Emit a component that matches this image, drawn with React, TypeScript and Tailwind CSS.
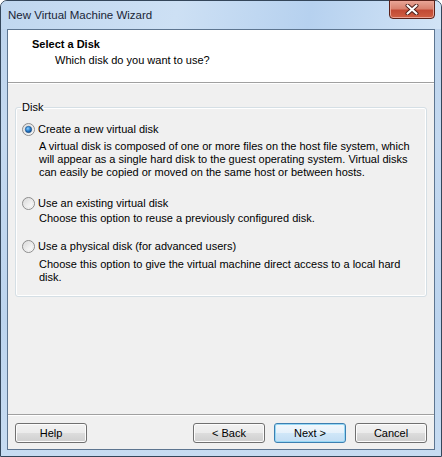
import React from "react";

function Radio({ checked, id }: { checked?: boolean; id: string }) {
  return (
    <svg width="13" height="13" viewBox="0 0 13 13" className="shrink-0">
      <defs>
        <linearGradient id={`${id}-bg`} x1="0" y1="0" x2="1" y2="1">
          <stop offset="0" stopColor="#d4d4d4" />
          <stop offset="0.6" stopColor="#f2f2f2" />
          <stop offset="1" stopColor="#ffffff" />
        </linearGradient>
        <radialGradient id={`${id}-dot`} cx="0.4" cy="0.35" r="0.7">
          <stop offset="0" stopColor="#8ed0ff" />
          <stop offset="0.5" stopColor="#2d84d2" />
          <stop offset="1" stopColor="#0d3d7a" />
        </radialGradient>
      </defs>
      <circle cx="6.5" cy="6.5" r="6" fill={`url(#${id}-bg)`} stroke="#8c8c8c" />
      <circle cx="6.5" cy="6.5" r="4.5" fill="none" stroke="#e6e6e6" strokeWidth="0.8" />
      {checked && (
        <circle cx="6.5" cy="6.5" r="3.2" fill={`url(#${id}-dot)`} stroke="#1a4f86" strokeWidth="0.6" />
      )}
    </svg>
  );
}

function Button({ label, primary }: { label: string; primary?: boolean }) {
  return (
    <button
      className={
        "w-[72px] h-[20px] rounded-[3px] border text-[11px] leading-none text-black flex items-center justify-center " +
        (primary
          ? "border-[#3c7fb1] shadow-[inset_0_0_0_1px_#97d8f5] bg-[linear-gradient(to_bottom,#f2f8fc_0%,#e5f1fb_50%,#d0e7f8_51%,#c2ddf4_100%)]"
          : "border-[#707070] shadow-[inset_0_0_0_1px_#fcfcfc] bg-[linear-gradient(to_bottom,#f2f2f2_0%,#ebebeb_50%,#dddddd_51%,#cfcfcf_100%)]")
      }
    >
      {label}
    </button>
  );
}

export default function App() {
  return (
    <div className="w-[442px] h-[457px] font-['Liberation_Sans',Arial,sans-serif]">
      <div className="h-full flex flex-col rounded-t-[7px] border border-[#34465a] bg-[linear-gradient(to_bottom,#bcd3ec_0%,#c4d9f0_30%,#bcd4ee_70%,#c7dcf2_100%)]">
        {/* Title bar */}
        <div className="h-[28px] flex items-start bg-[linear-gradient(100deg,#c0d7ef_0%,#cde0f4_40%,#b6d1ef_70%,#d2e4f6_100%)] rounded-t-[6px]">
          <div className="pl-[7px] pt-[6px] text-[11.5px] leading-[16px] text-[#1a2636]">
            New Virtual Machine Wizard
          </div>
          <div className="ml-auto mr-[6px] w-[46px] h-[19px] -mt-px rounded-b-[4px] border border-[#5a2119] shadow-[inset_0_0_0_1px_#eba395] bg-[linear-gradient(to_bottom,#e8a596_0%,#d9826f_45%,#c24a35_55%,#cf5f43_100%)] flex items-center justify-center">
            <svg width="14" height="11" viewBox="0 0 14 11">
              <path d="M2.5 1.5 L11.5 9.5 M11.5 1.5 L2.5 9.5" stroke="#4a1d18" strokeWidth="4" strokeLinecap="round" />
              <path d="M2.5 1.5 L11.5 9.5 M11.5 1.5 L2.5 9.5" stroke="#ffffff" strokeWidth="2.2" strokeLinecap="round" />
            </svg>
          </div>
        </div>

        {/* Client area */}
        <div className="mx-[6px] mb-[6px] flex-1 flex flex-col border border-[#5d7590] bg-[#f0f0f0] text-[11px] text-black">
          {/* Header */}
          <div className="h-[52px] bg-white pt-[6px] pl-[24px] leading-[16px]">
            <div className="font-bold">Select a Disk</div>
            <div className="pl-[23px]">Which disk do you want to use?</div>
          </div>
          <div className="h-px bg-[#a0a0a0]" />
          <div className="h-px bg-white" />

          {/* Body */}
          <div className="flex-1">
            <fieldset className="mt-[15px] mx-[7px] h-[198px] rounded-[3px] border border-[#d5dfe5] shadow-[inset_0_0_0_1px_#ffffff] pl-[6px]">
              <legend className="-ml-px px-[1px] leading-[16px]">Disk</legend>
              <div className="pt-[6px]">
                <div className="flex items-center gap-[3px] h-[16px]">
                  <Radio checked id="r1" />
                  <span>Create a new virtual disk</span>
                </div>
                <div className="mt-[3px] pl-[17px] leading-[13px] whitespace-nowrap">
                  <div>A virtual disk is composed of one or more files on the host file system, which</div>
                  <div>will appear as a single hard disk to the guest operating system. Virtual disks</div>
                  <div>can easily be copied or moved on the same host or between hosts.</div>
                </div>

                <div className="mt-[16px] flex items-center gap-[3px] h-[16px]">
                  <Radio id="r2" />
                  <span>Use an existing virtual disk</span>
                </div>
                <div className="mt-[1px] pl-[17px] leading-[13px] whitespace-nowrap">
                  Choose this option to reuse a previously configured disk.
                </div>

                <div className="mt-[13px] flex items-center gap-[3px] h-[16px]">
                  <Radio id="r3" />
                  <span>Use a physical disk (for advanced users)</span>
                </div>
                <div className="mt-[4px] pl-[17px] leading-[13px] whitespace-nowrap">
                  <div>Choose this option to give the virtual machine direct access to a local hard</div>
                  <div>disk.</div>
                </div>
              </div>
            </fieldset>
          </div>

          <div className="h-px bg-[#a0a0a0]" />
          <div className="h-px bg-white" />

          {/* Buttons */}
          <div className="h-[33px] px-[7px] pt-[7px] flex items-start">
            <Button label="Help" />
            <div className="ml-auto flex gap-[9px]">
              <Button label="< Back" />
              <Button label="Next >" primary />
              <Button label="Cancel" />
            </div>
          </div>
        </div>
      </div>
    </div>
  );
}
